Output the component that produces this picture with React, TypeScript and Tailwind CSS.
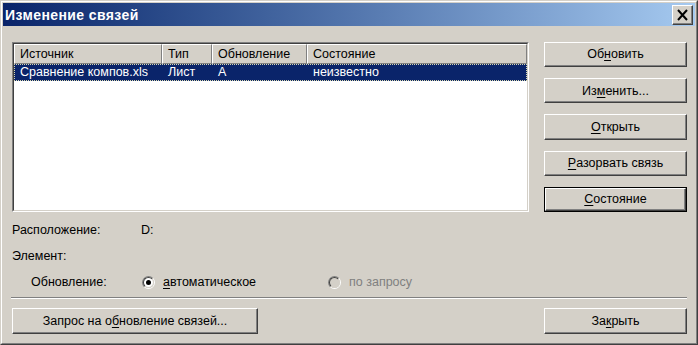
import React from "react";

function Btn({
  children,
  className = "",
  def = false,
}: {
  children: React.ReactNode;
  className?: string;
  def?: boolean;
}) {
  if (def) {
    return (
      <div className={"h-[26px] border border-black bg-[#D4D0C8] " + className}>
        <div className="h-full border border-t-white border-l-white border-r-[#404040] border-b-[#404040] shadow-[inset_-1px_-1px_0_#808080] flex items-center justify-center">
          {children}
        </div>
      </div>
    );
  }
  return (
    <div
      className={
        "h-[26px] bg-[#D4D0C8] border border-t-white border-l-white border-r-[#404040] border-b-[#404040] shadow-[inset_-1px_-1px_0_#808080] flex items-center justify-center " +
        className
      }
    >
      {children}
    </div>
  );
}

function U({ children }: { children: React.ReactNode }) {
  return <span className="underline underline-offset-[2px]">{children}</span>;
}

function Radio({ checked, disabled }: { checked?: boolean; disabled?: boolean }) {
  return (
    <div className="w-[13px] h-[13px] rounded-full border border-t-[#808080] border-l-[#808080] border-r-white border-b-white">
      <div
        className={
          "w-full h-full rounded-full border border-t-[#404040] border-l-[#404040] border-r-[#D4D0C8] border-b-[#D4D0C8] flex items-center justify-center " +
          (disabled ? "bg-[#D4D0C8]" : "bg-white")
        }
      >
        {checked && <div className="w-[5px] h-[5px] rounded-full bg-black" />}
      </div>
    </div>
  );
}

function HeaderCell({ w, children }: { w: string; children: React.ReactNode }) {
  return (
    <div
      className={
        w +
        " h-full bg-[#D4D0C8] border-t border-l border-t-white border-l-white border-r border-b border-r-[#808080] border-b-[#808080] flex items-center pl-[5px]"
      }
    >
      {children}
    </div>
  );
}

export default function App() {
  return (
    <div className="w-[698px] h-[345px] bg-[#D4D0C8] border border-t-[#D4D0C8] border-l-[#D4D0C8] border-r-[#404040] border-b-[#404040] font-['Liberation_Sans',Arial,sans-serif] text-[12.5px] leading-none text-black select-none">
      <div className="h-full border border-t-white border-l-white border-r-[#808080] border-b-[#808080] p-px flex flex-col">
        {/* Title bar */}
        <div className="h-[23px] shrink-0 bg-gradient-to-r from-[#0A246A] to-[#A6CAF0] flex items-center justify-between pl-[2px] pr-[2px]">
          <span className="text-white font-bold text-[14px] tracking-[0.4px] pt-px">Изменение связей</span>
          <div className="w-[21px] h-[20px] bg-[#D4D0C8] border border-t-white border-l-white border-r-[#404040] border-b-[#404040] shadow-[inset_-1px_-1px_0_#808080] flex items-center justify-center">
            <svg width="13" height="12" viewBox="0 0 13 12">
              <path d="M2 1 L11 11 M11 1 L2 11" stroke="black" strokeWidth="2" />
            </svg>
          </div>
        </div>

        {/* Content */}
        <div className="flex-1 flex flex-col pl-[9px] pr-[8px] pt-[16px]">
          <div className="h-[170px] flex gap-[15px]">
            {/* List */}
            <div className="w-[517px] h-full border border-t-[#808080] border-l-[#808080] border-r-white border-b-white">
              <div className="w-full h-full border border-t-[#404040] border-l-[#404040] border-r-[#D4D0C8] border-b-[#D4D0C8] bg-white flex flex-col">
                <div className="h-[20px] flex shrink-0">
                  <HeaderCell w="w-[148px]">Источник</HeaderCell>
                  <HeaderCell w="w-[50px]">Тип</HeaderCell>
                  <HeaderCell w="w-[95px]">Обновление</HeaderCell>
                  <HeaderCell w="w-[220px]">Состояние</HeaderCell>
                </div>
                <div className="h-[17px] bg-[#0A246A] text-white border border-dotted border-[#d8d8b0] flex items-center">
                  <div className="w-[147px] pl-[5px]">Сравнение компов.xls</div>
                  <div className="w-[50px] pl-[6px]">Лист</div>
                  <div className="w-[95px] pl-[6px]">A</div>
                  <div className="pl-[6px]">неизвестно</div>
                </div>
              </div>
            </div>
            {/* Buttons */}
            <div className="w-[143px] flex flex-col gap-[11px]">
              <Btn>
                Об<U>н</U>овить
              </Btn>
              <Btn>
                Из<U>м</U>енить...
              </Btn>
              <Btn>
                <U>О</U>ткрыть
              </Btn>
              <Btn>
                <U>Р</U>азорвать связь
              </Btn>
              <Btn def>
                <U>С</U>остояние
              </Btn>
            </div>
          </div>

          <div className="mt-[8px] h-[20px] flex items-center">
            <span className="w-[129px]">Расположение:</span>
            <span>D:</span>
          </div>
          <div className="mt-[6px] h-[20px] flex items-center">
            <span>Элемент:</span>
          </div>
          <div className="mt-[6px] h-[20px] flex items-center">
            <span className="ml-[19px] w-[111px]">Обновление:</span>
            <Radio checked />
            <span className="ml-[8px] w-[165px]">
              <U>а</U>втоматическое
            </span>
            <Radio disabled />
            <span className="ml-[8px] text-[#808080]">по запросу</span>
          </div>

          <div className="mt-[5px] -ml-px h-[2px] border-t border-t-[#808080] border-b border-b-white" />

          <div className="mt-[9px] flex justify-between">
            <Btn className="w-[246px]">
              Запрос на о<U>б</U>новление связей...
            </Btn>
            <Btn className="w-[143px]">
              За<U>к</U>рыть
            </Btn>
          </div>
        </div>
      </div>
    </div>
  );
}
